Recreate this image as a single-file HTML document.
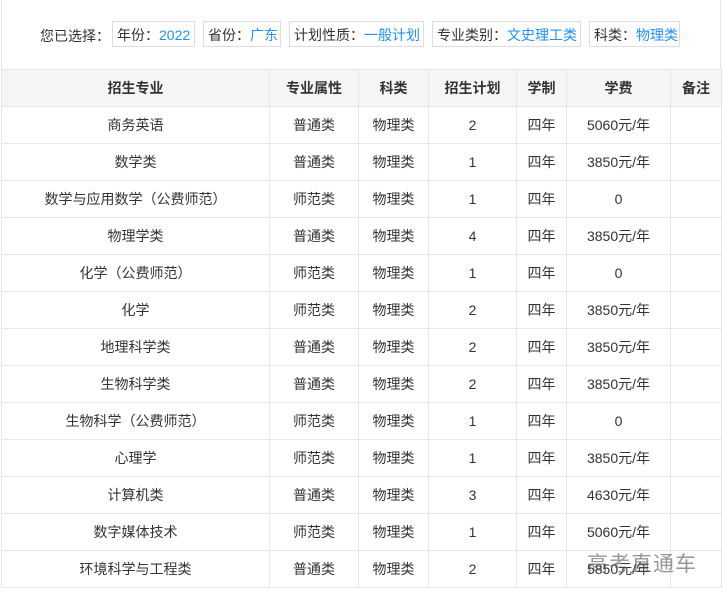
<!DOCTYPE html>
<html><head><meta charset="utf-8"><style>
body{margin:0;background:#fff;font-family:"Liberation Sans","Noto Sans CJK SC",sans-serif;font-size:14px;color:#333;width:723px;height:600px;overflow:hidden;position:relative}
.top{position:absolute;left:1px;top:0;width:720px;height:69px;border-left:1px solid #e6e6e6;border-right:1px solid #e6e6e6;box-sizing:border-box}
.lab{position:absolute;top:26px;left:40px;font-size:14px}
.tag{position:absolute;top:21px;height:26px;line-height:26px;border:1px solid #ddd;box-sizing:border-box;padding:0 4px;white-space:nowrap}
.tag b{font-weight:normal;color:#1e90ff}
table{position:absolute;left:1px;top:69px;border-collapse:collapse;table-layout:fixed;width:720px}
td,th{border:1px solid #e6e6e6;height:36px;padding:0;text-align:center;font-weight:normal}
th{background:#f5f5f5;font-weight:bold;color:#333}
.wm{position:absolute;left:587px;top:548px;font-size:21px;color:rgba(80,80,80,0.6);letter-spacing:1px}
</style></head><body>
<div class="top"></div>
<div class="lab">您已选择：</div>
<div class="tag" style="left:112px;width:83px">年份：<b>2022</b></div>
<div class="tag" style="left:203px;width:78px">省份：<b>广东</b></div>
<div class="tag" style="left:289px;width:135px">计划性质：<b>一般计划</b></div>
<div class="tag" style="left:432px;width:149px">专业类别：<b>文史理工类</b></div>
<div class="tag" style="left:589px;width:91px">科类：<b>物理类</b></div>
<table>
<colgroup><col style="width:268px"><col style="width:89px"><col style="width:70px"><col style="width:88px"><col style="width:50px"><col style="width:104px"><col style="width:51px"></colgroup>
<tr><th>招生专业</th><th>专业属性</th><th>科类</th><th>招生计划</th><th>学制</th><th>学费</th><th>备注</th></tr>
<tr><td>商务英语</td><td>普通类</td><td>物理类</td><td>2</td><td>四年</td><td>5060元/年</td><td></td></tr>
<tr><td>数学类</td><td>普通类</td><td>物理类</td><td>1</td><td>四年</td><td>3850元/年</td><td></td></tr>
<tr><td>数学与应用数学（公费师范）</td><td>师范类</td><td>物理类</td><td>1</td><td>四年</td><td>0</td><td></td></tr>
<tr><td>物理学类</td><td>普通类</td><td>物理类</td><td>4</td><td>四年</td><td>3850元/年</td><td></td></tr>
<tr><td>化学（公费师范）</td><td>师范类</td><td>物理类</td><td>1</td><td>四年</td><td>0</td><td></td></tr>
<tr><td>化学</td><td>师范类</td><td>物理类</td><td>2</td><td>四年</td><td>3850元/年</td><td></td></tr>
<tr><td>地理科学类</td><td>普通类</td><td>物理类</td><td>2</td><td>四年</td><td>3850元/年</td><td></td></tr>
<tr><td>生物科学类</td><td>普通类</td><td>物理类</td><td>2</td><td>四年</td><td>3850元/年</td><td></td></tr>
<tr><td>生物科学（公费师范）</td><td>师范类</td><td>物理类</td><td>1</td><td>四年</td><td>0</td><td></td></tr>
<tr><td>心理学</td><td>师范类</td><td>物理类</td><td>1</td><td>四年</td><td>3850元/年</td><td></td></tr>
<tr><td>计算机类</td><td>普通类</td><td>物理类</td><td>3</td><td>四年</td><td>4630元/年</td><td></td></tr>
<tr><td>数字媒体技术</td><td>师范类</td><td>物理类</td><td>1</td><td>四年</td><td>5060元/年</td><td></td></tr>
<tr><td>环境科学与工程类</td><td>普通类</td><td>物理类</td><td>2</td><td>四年</td><td>5850元/年</td><td></td></tr>
</table>
<div class="wm">高考直通车</div>
</body></html>
